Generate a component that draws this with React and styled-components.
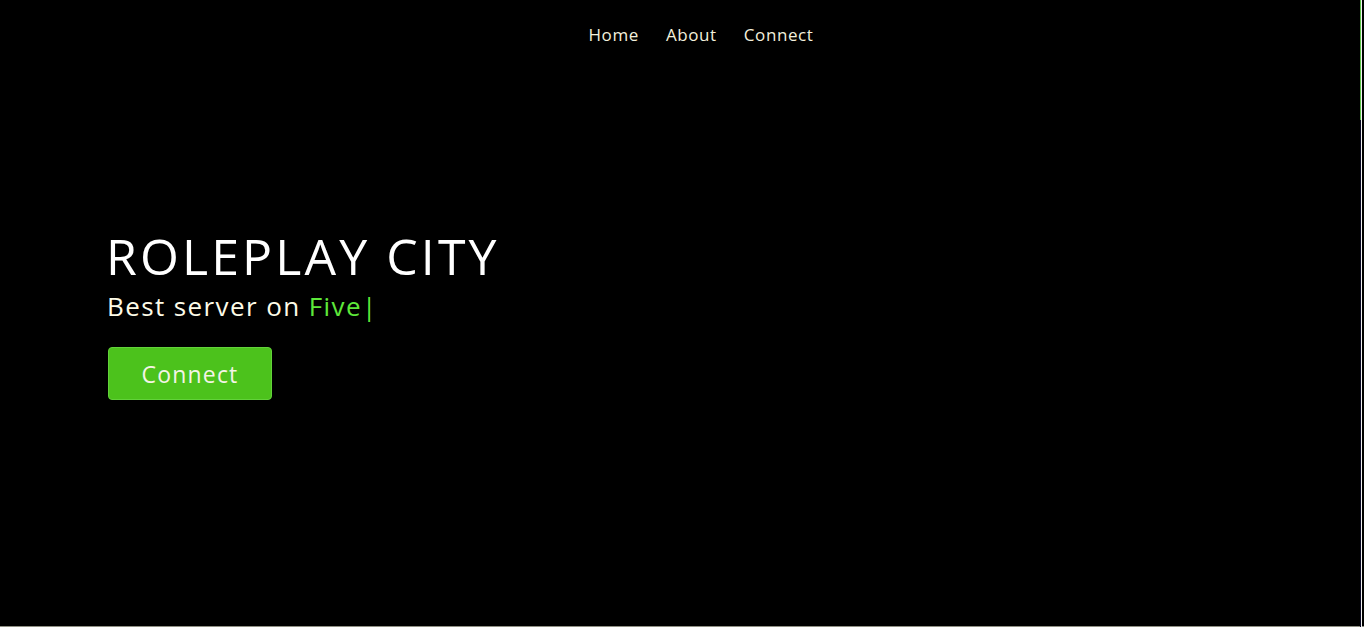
import React from 'react'
import styled, { createGlobalStyle } from 'styled-components'

const GlobalStyle = createGlobalStyle`
  html, body {
    margin: 0;
    padding: 0;
    background: #000;
  }
  body {
    font-family: "Open Sans", "Liberation Sans", sans-serif;
    overflow: hidden;
  }
`

function App() {
  return (
    <>
      <GlobalStyle />
      <Page>
        <Hero>
          <Nav>
            <NavLink href="#home">Home</NavLink>
            <NavLink href="#about">About</NavLink>
            <NavLink href="#connect">Connect</NavLink>
          </Nav>

          <Content>
            <Title>ROLEPLAY CITY</Title>
            <SubTitle>
              Best server on <Typed>Five</Typed><Cursor>|</Cursor>
            </SubTitle>
            <ConnectButton>Connect</ConnectButton>
          </Content>
        </Hero>
        <ScrollTrack>
          <ScrollThumb />
        </ScrollTrack>
      </Page>
    </>
  )
}

export default App

const Page = styled.div`
  background: #000;
  color: #fff;
`

const Hero = styled.section`
  height: 100vh;
  box-sizing: border-box;
  border-bottom: 1px solid rgba(240, 240, 220, 0.6);
  display: flex;
  flex-direction: column;
`

const Nav = styled.nav`
  display: flex;
  justify-content: center;
  gap: 27px;
  padding-top: 24px;
  padding-left: 38px;
`

const NavLink = styled.a`
  color: #f3f0dc;
  text-decoration: none;
  font-size: 17px;
  line-height: 22px;
  letter-spacing: 0.6px;
  cursor: pointer;

  &:hover {
    color: #5fdc2e;
  }
`

const Content = styled.div`
  padding: 180px 0 0 106px;
  display: flex;
  flex-direction: column;
  align-items: flex-start;
`

const Title = styled.h1`
  margin: 0;
  font-weight: 400;
  font-size: 50px;
  line-height: 60px;
  letter-spacing: 3.1px;
  color: #fff;
`

const SubTitle = styled.p`
  margin: 0 0 0 1px;
  font-size: 26px;
  line-height: 41px;
  letter-spacing: 1.4px;
  color: #fdfbe8;
`

const Typed = styled.span`
  color: #5ee83a;
`

const Cursor = styled.span`
  color: #5ee83a;
`

const ConnectButton = styled.button`
  margin: 20px 0 0 2px;
  width: 164px;
  height: 53px;
  background: #4cc21c;
  border: 1px solid #62d23a;
  border-radius: 4px;
  color: #f4f4e6;
  font-family: inherit;
  font-size: 23px;
  letter-spacing: 1.2px;
  cursor: pointer;

  &:hover {
    background: #43a818;
  }
`

const ScrollTrack = styled.div`
  position: fixed;
  top: 0;
  right: 2px;
  width: 2px;
  height: 100vh;
  background: linear-gradient(90deg, #0a0a24 0 1px, #f2f2f2 1px 2px);
`

const ScrollThumb = styled.div`
  height: 120px;
  background: linear-gradient(90deg, #5cc24a 0 1px, #f2f2f2 1px 2px);
`
